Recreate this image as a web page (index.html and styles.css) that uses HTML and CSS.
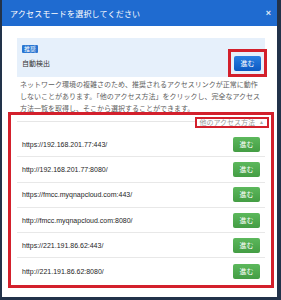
FILE: index.html
```html
<!DOCTYPE html>
<html lang="ja">
<head>
<meta charset="utf-8">
<link rel="stylesheet" href="styles.css">
</head>
<body>
<div class="dialog">
  <div class="titlebar">
    <span class="title">アクセスモードを選択してください</span>
    <span class="close">×</span>
  </div>
  <div class="recommend">
    <div class="rec-info">
      <span class="badge">推奨</span>
      <span class="rec-label">自動検出</span>
    </div>
    <div class="mark mark-btn"><button class="btn btn-blue">進む</button></div>
  </div>
  <p class="note">ネットワーク環境の複雑さのため、推奨されるアクセスリンクが正常に動作しないことがあります。「他のアクセス方法」をクリックし、完全なアクセス方法一覧を取得し、そこから選択することができます。</p>
  <div class="mark mark-list">
    <div class="list-head">
      <div class="head-line"></div>
      <div class="mark mark-link"><span>他のアクセス方法</span><span class="caret">▲</span></div>
    </div>
    <ul class="urls">
      <li class="url-row"><span class="url">https://192.168.201.77:443/</span><button class="btn btn-green">進む</button></li>
      <li class="url-row"><span class="url">http://192.168.201.77:8080/</span><button class="btn btn-green">進む</button></li>
      <li class="url-row"><span class="url">https://fmcc.myqnapcloud.com:443/</span><button class="btn btn-green">進む</button></li>
      <li class="url-row"><span class="url">http://fmcc.myqnapcloud.com:8080/</span><button class="btn btn-green">進む</button></li>
      <li class="url-row"><span class="url">https://221.191.86.62:443/</span><button class="btn btn-green">進む</button></li>
      <li class="url-row"><span class="url">http://221.191.86.62:8080/</span><button class="btn btn-green">進む</button></li>
    </ul>
  </div>
</div>
</body>
</html>
```
FILE: styles.css
```css
* { box-sizing: border-box; }
html, body {
  margin: 0;
  padding: 0;
  height: 300px;
  overflow: hidden;
  background: #22324a;
  font-family: "Liberation Sans", "Noto Sans CJK TC", sans-serif;
}
.dialog {
  margin-left: 2px;
  width: 275px;
  height: 297px;
  background: #ffffff;
  display: flex;
  flex-direction: column;
}
.titlebar {
  height: 26px;
  background: #1f6bd0;
  color: #ffffff;
  display: flex;
  align-items: center;
  justify-content: space-between;
  padding: 0 6px 0 8px;
}
.title {
  font-size: 8px;
  letter-spacing: 0.2px;
}
.close {
  font-size: 9px;
  font-weight: bold;
  color: #dfe9f7;
}
.recommend {
  margin: 12px 12px 0 15px;
  height: 39px;
  background: #e6f0fb;
  display: flex;
  justify-content: space-between;
  padding-left: 5px;
}
.rec-info {
  display: flex;
  flex-direction: column;
  align-items: flex-start;
  padding-top: 7px;
}
.badge {
  height: 8px;
  line-height: 8px;
  font-size: 6px;
  padding: 0 2px;
  background: #2a76d2;
  color: #ffffff;
  border-radius: 1px;
}
.rec-label {
  margin-top: 6px;
  font-size: 7px;
  line-height: 10px;
  color: #333333;
}
.mark {
  border: 3px solid #d3202c;
}
.mark-btn {
  align-self: flex-end;
  margin-right: -2px;
  padding: 4px 3px 3px;
  display: flex;
}
.btn {
  width: 27px;
  height: 15px;
  padding: 0;
  border: none;
  border-radius: 2px;
  color: #ffffff;
  font-size: 7px;
  line-height: 15px;
  font-family: "Liberation Sans", "Noto Sans CJK TC", sans-serif;
}
.btn-blue {
  background: linear-gradient(#2a80e2, #0c59c2);
}
.btn-green {
  background: linear-gradient(#5cb85c, #449d44);
}
.note {
  margin: 2px 15px 0 18px;
  font-size: 7px;
  line-height: 12px;
  color: #5e5e5e;
}
.mark-list {
  margin: -3px 3px 0 6px;
  height: 176px;
}
.list-head {
  height: 17px;
  display: flex;
  align-items: flex-start;
  padding: 0 2px 0 6px;
}
.head-line {
  flex: 1;
  margin-top: 6px;
  border-top: 1px solid #e6e6e6;
}
.mark-link {
  margin-top: 2px;
  height: 11px;
  border-width: 2px;
  padding: 0 3px 0 2px;
  display: flex;
  align-items: center;
  font-size: 7px;
  line-height: 7px;
  color: #999999;
}
.caret {
  font-size: 5px;
  margin-left: 4px;
  color: #aaaaaa;
}
.urls {
  list-style: none;
  margin: 0 6px;
  padding: 0;
}
.url-row {
  height: 25.3px;
  border-bottom: 1px solid #e8e8e8;
  display: flex;
  align-items: center;
  justify-content: space-between;
  padding: 0 5px;
}
.url-row:last-child {
  border-bottom: none;
}
.url {
  font-size: 7px;
  color: #1e1e1e;
}
```
